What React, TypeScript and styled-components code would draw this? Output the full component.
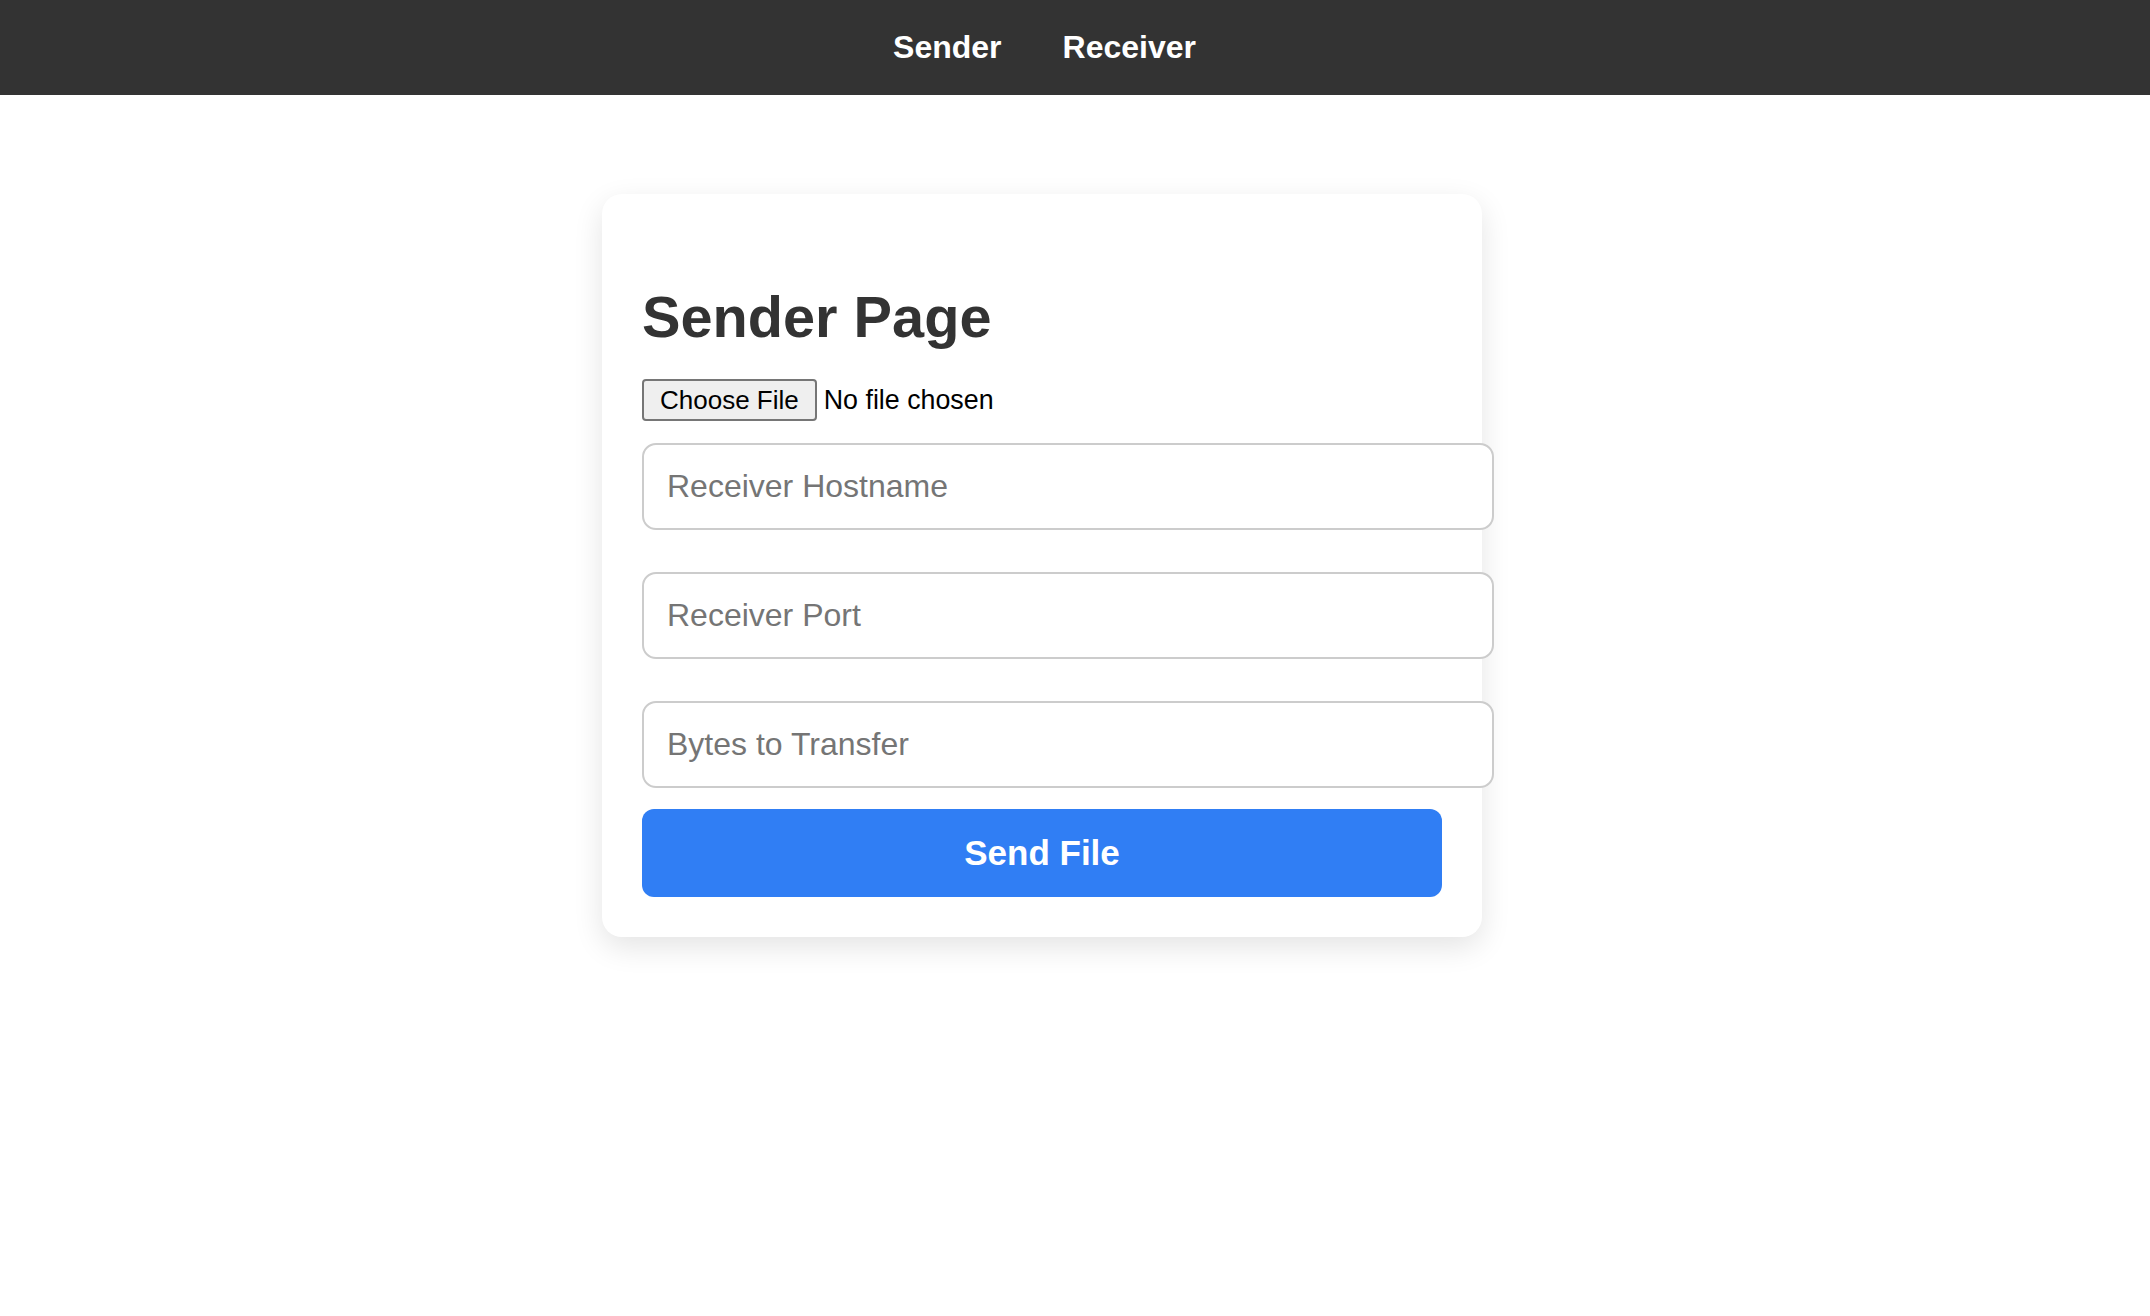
import React from "react";
import styled, { createGlobalStyle } from "styled-components";

const GlobalStyle = createGlobalStyle`
  html, body {
    margin: 0;
    padding: 0;
    background: #ffffff;
    font-family: "Liberation Sans", Arial, Helvetica, sans-serif;
  }
  * { box-sizing: border-box; }
`;

const NavBar = styled.nav`
  height: 95px;
  background: #333333;
  display: flex;
  align-items: center;
  justify-content: center;
`;

const NavLink = styled.a`
  color: #ffffff;
  font-size: 32px;
  font-weight: 700;
  text-decoration: none;
  margin-right: 61px;
  cursor: pointer;
`;

const Main = styled.main`
  display: flex;
  justify-content: center;
  padding: 99px 66px 60px 0;
`;

const Card = styled.section`
  width: 880px;
  background: #ffffff;
  border-radius: 20px;
  box-shadow: 0 10px 30px rgba(0, 0, 0, 0.11);
  padding: 40px;
  display: flex;
  flex-direction: column;
`;

const Title = styled.h1`
  margin: 51px 0 29px;
  font-size: 57.7px;
  font-weight: 700;
  color: #333333;
  line-height: 65px;
`;

const FileInput = styled.input`
  font-family: "Liberation Sans", Arial, sans-serif;
  font-size: 26.8px;
  color: #000000;
  height: 42px;
  line-height: 30px;
  margin: 0 0 22px;
  padding: 0;

  &::file-selector-button {
    font-family: "Liberation Sans", Arial, sans-serif;
    font-size: 26px;
    line-height: 30px;
    height: 42px;
    padding: 0 16px;
    margin: 0 7px 0 0;
    background: #efefef;
    color: #000000;
    border: 2px solid #767676;
    border-radius: 4px;
  }
`;

const TextField = styled.input<{ $gap: number }>`
  width: calc(100% + 52px);
  height: 87px;
  padding: 0 23px;
  border: 2px solid #cccccc;
  border-radius: 14px;
  font-family: "Liberation Sans", Arial, sans-serif;
  font-size: 32px;
  color: #333333;
  background: #ffffff;
  margin: 0 0 ${(p) => p.$gap}px;
  outline: none;

  &::placeholder {
    color: #757575;
  }
`;

const SendButton = styled.button`
  width: 100%;
  height: 88px;
  border: none;
  border-radius: 12px;
  background: #307ef4;
  color: #ffffff;
  font-family: "Liberation Sans", Arial, sans-serif;
  font-size: 35px;
  font-weight: 700;
  cursor: pointer;
`;

export default function App() {
  return (
    <>
      <GlobalStyle />
      <NavBar>
        <NavLink>Sender</NavLink>
        <NavLink>Receiver</NavLink>
      </NavBar>
      <Main>
        <Card>
          <Title>Sender Page</Title>
          <FileInput type="file" />
          <TextField $gap={42} type="text" placeholder="Receiver Hostname" />
          <TextField $gap={42} type="text" placeholder="Receiver Port" />
          <TextField $gap={21} type="text" placeholder="Bytes to Transfer" />
          <SendButton type="button">Send File</SendButton>
        </Card>
      </Main>
    </>
  );
}
